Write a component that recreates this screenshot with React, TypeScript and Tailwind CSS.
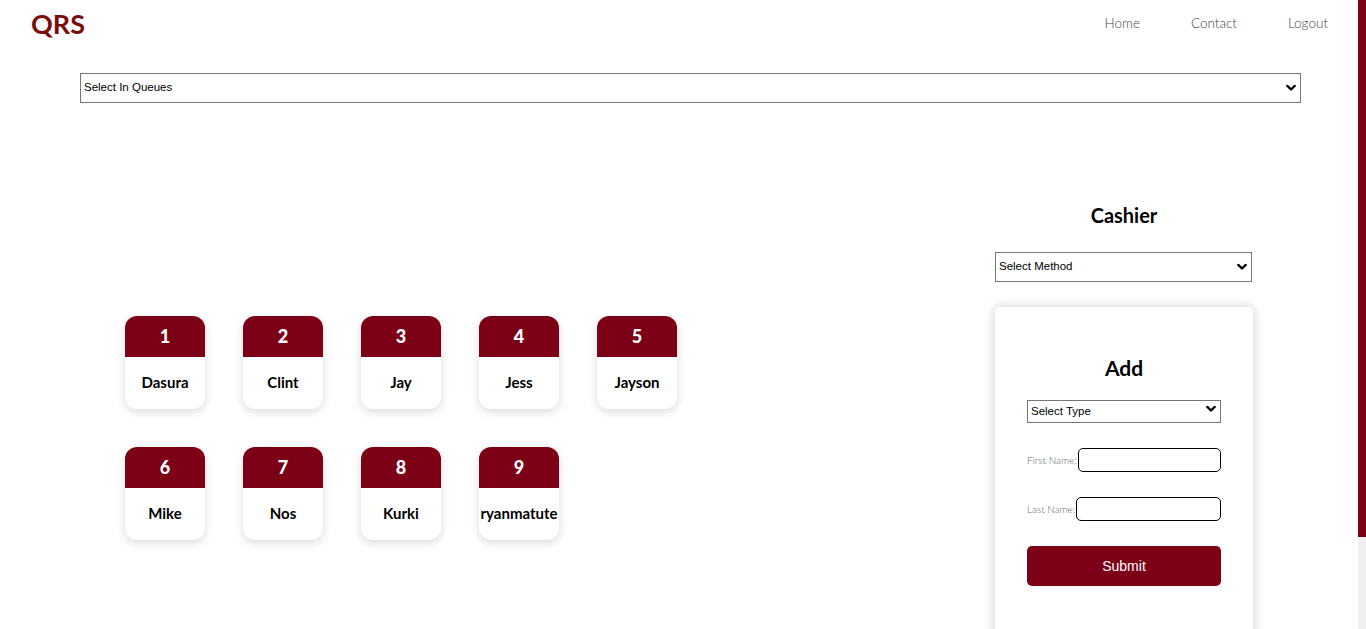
import React from 'react';

const queue = [
  { no: 1, name: 'Dasura' },
  { no: 2, name: 'Clint' },
  { no: 3, name: 'Jay' },
  { no: 4, name: 'Jess' },
  { no: 5, name: 'Jayson' },
  { no: 6, name: 'Mike' },
  { no: 7, name: 'Nos' },
  { no: 8, name: 'Kurki' },
  { no: 9, name: 'ryanmatute' },
];

const Chevron = () => (
  <svg className="pointer-events-none absolute right-[5px] top-1/2 -translate-y-1/2" width="10" height="7" viewBox="0 0 10 7" fill="none">
    <path d="M1.3 1.4 L5 5 L8.7 1.4" stroke="#000" strokeWidth="2.3" strokeLinecap="round" strokeLinejoin="round" />
  </svg>
);

const Select: React.FC<{ label: string; className?: string }> = ({ label, className }) => (
  <div className={`relative ${className ?? ''}`}>
    <select className="h-full w-full appearance-none border border-[#767676] bg-white pl-[3px] font-['Liberation_Sans',Arial,sans-serif] text-[11.5px] text-black outline-none">
      <option>{label}</option>
    </select>
    <Chevron />
  </div>
);

const QueueCard: React.FC<{ no: number; name: string }> = ({ no, name }) => (
  <div className="flex h-[93px] w-[80px] flex-col overflow-hidden rounded-[12px] bg-white shadow-[0_3px_10px_rgba(0,0,0,0.14)]">
    <div className="flex h-[41px] items-center justify-center bg-[#7c0016] text-[18px] font-black text-white">{no}</div>
    <div className="flex flex-1 items-center justify-center whitespace-nowrap pb-[2px] text-[15px] font-bold text-black">{name}</div>
  </div>
);

const Field: React.FC<{ label: string; className?: string }> = ({ label, className }) => (
  <div className={`flex items-center ${className ?? ''}`}>
    <label className="whitespace-nowrap pr-[1px] text-[10px] font-light text-[#666]">{label}</label>
    <input className="h-[24px] w-0 min-w-0 flex-1 rounded-[5px] border border-black bg-white outline-none" />
  </div>
);

export default function App() {
  return (
    <div className="flex h-screen overflow-hidden bg-white font-['Lato',sans-serif]">
      <div className="flex-1 overflow-hidden">
        <nav className="flex h-[46px] items-center justify-between pl-[31px] pr-[30px]">
          <span className="text-[27px] font-bold leading-none text-[#7a0c0c]">QRS</span>
          <div className="flex gap-[51px] text-[13.5px] font-light text-[#444]">
            <a>Home</a>
            <a>Contact</a>
            <a>Logout</a>
          </div>
        </nav>

        <Select label="Select In Queues" className="ml-[80px] mt-[27px] h-[30px] w-[1221px]" />

        <div className="flex items-start">
          <div className="flex-1 pl-[125px] pt-[213px]">
            <div className="grid grid-cols-[repeat(5,80px)] gap-x-[38px] gap-y-[38px]">
              {queue.map((q) => (
                <QueueCard key={q.no} no={q.no} name={q.name} />
              ))}
            </div>
          </div>

          <div className="mr-[105px] mt-[98px] w-[258px]">
            <h2 className="text-center text-[20px] font-bold leading-[28px] text-black">Cashier</h2>
            <Select label="Select Method" className="mt-[23px] h-[30px] w-[257px]" />

            <div className="mt-[25px] rounded-[5px] bg-white px-[32px] pb-[60px] pt-[47px] shadow-[0_0_12px_rgba(0,0,0,0.2)]">
              <h3 className="text-center text-[21px] font-bold leading-[28px] text-black">Add</h3>
              <Select label="Select Type" className="mt-[15px] h-[23px] w-full" />
              <Field label="First Name:" className="mt-[28px]" />
              <Field label="Last Name:" className="mt-[25px]" />
              <button className="mt-[25px] h-[40px] w-full rounded-[5px] bg-[#7c0016] font-['Liberation_Sans',Arial,sans-serif] text-[14px] text-white">
                Submit
              </button>
            </div>
          </div>
        </div>
      </div>

      {/* scrollbar */}
      <div className="flex w-[8px] flex-col bg-[#f0f0f0]">
        <div className="h-[537px] bg-[#7c0016]" />
      </div>
    </div>
  );
}
